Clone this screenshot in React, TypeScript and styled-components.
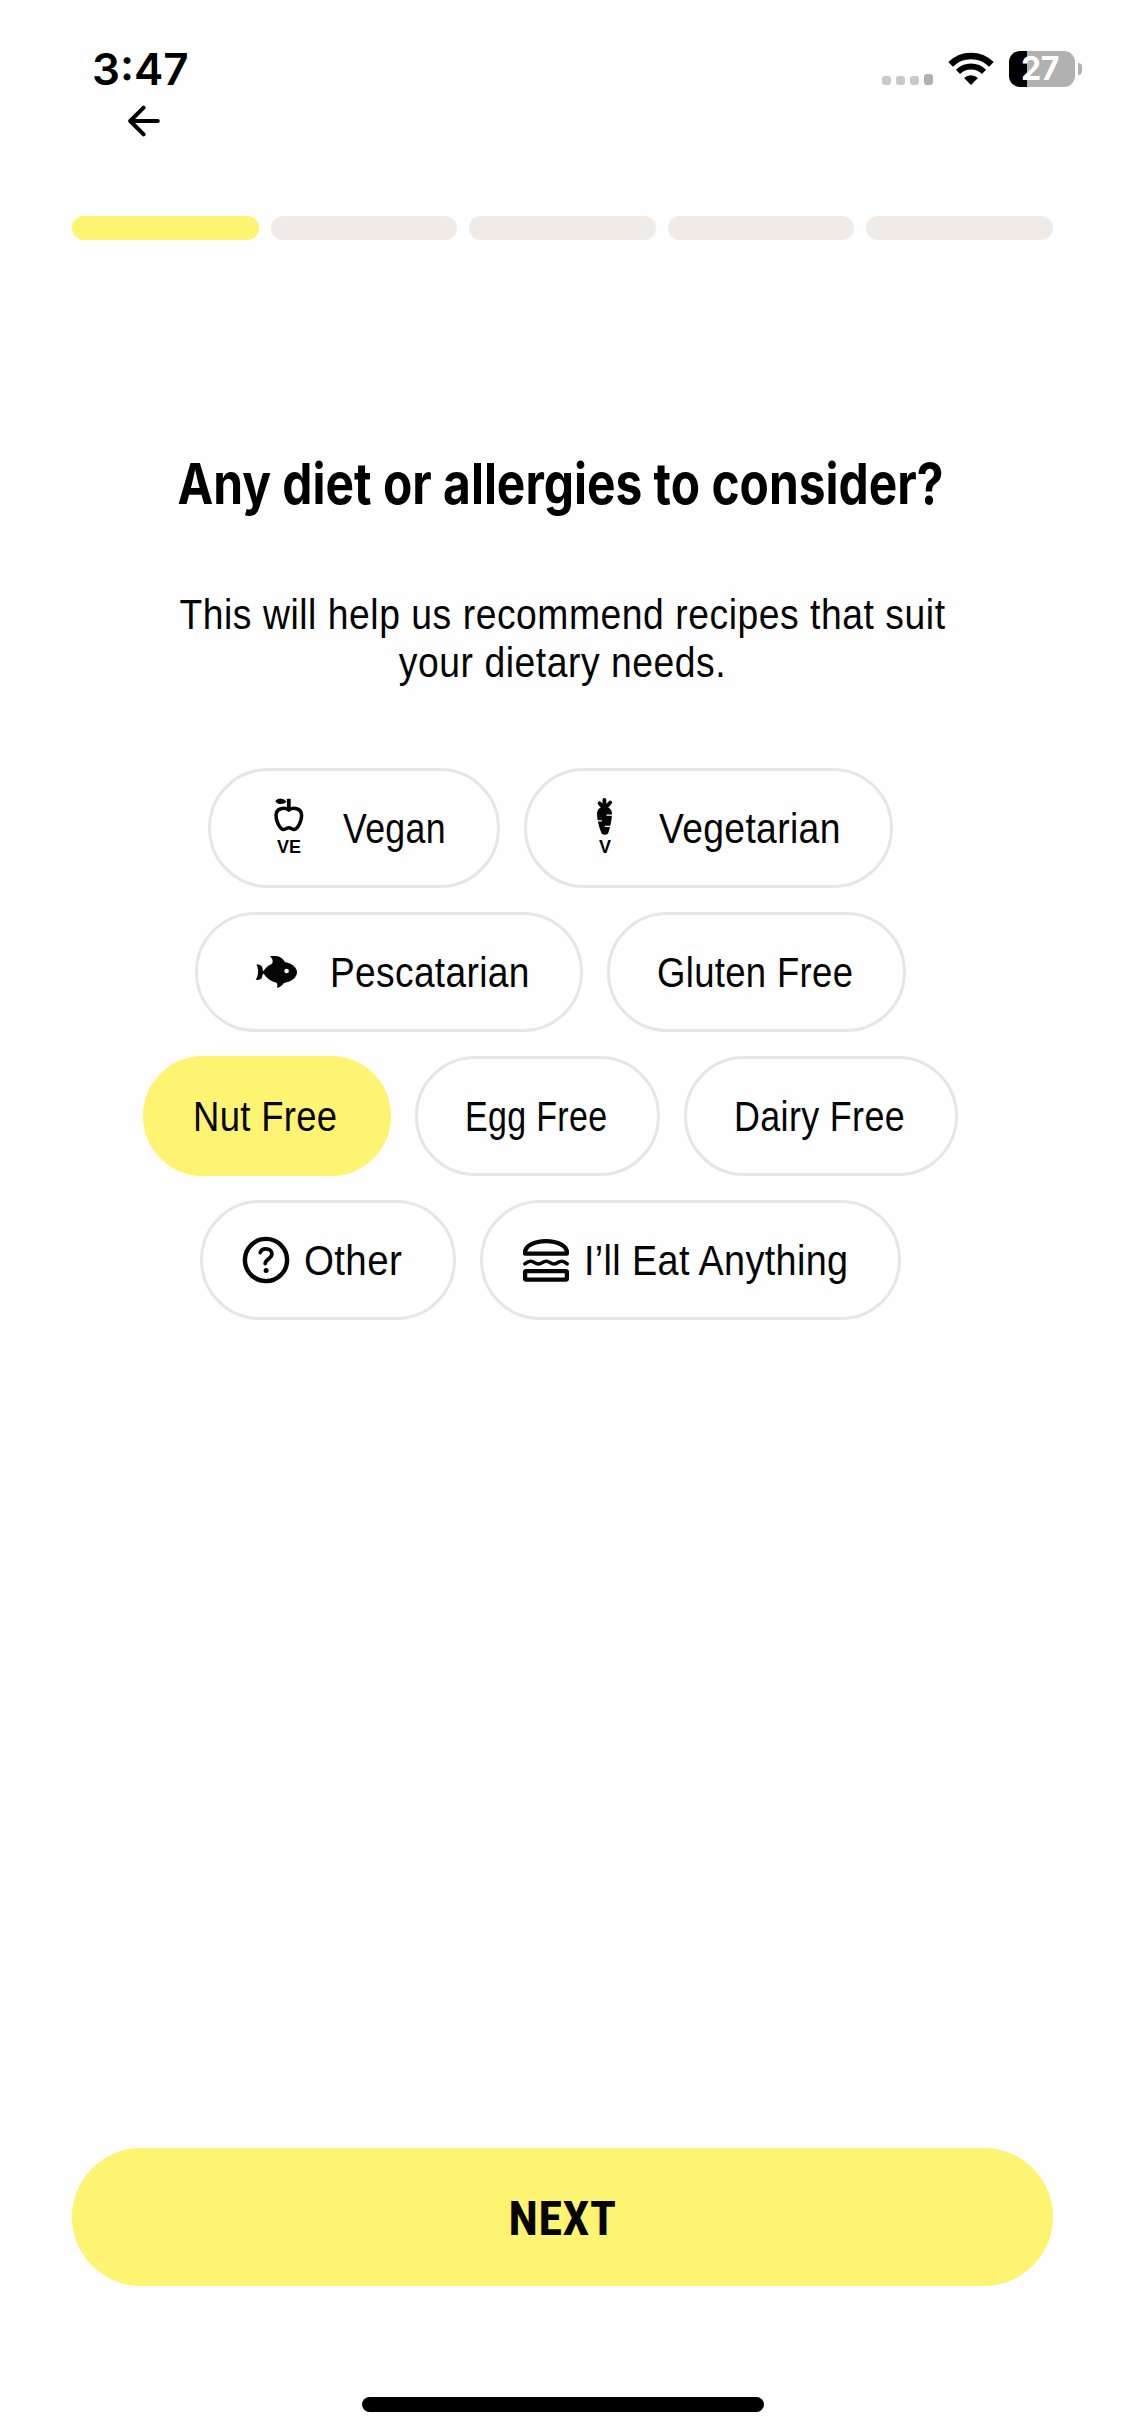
import React from 'react';
import styled, { createGlobalStyle } from 'styled-components';

const YELLOW = '#fff372';
const INK = '#050505';

const GlobalStyle = createGlobalStyle`
  *, *::before, *::after { box-sizing: border-box; }
  body { margin: 0; background: #fefefe; }
`;

const Screen = styled.div`
  display: flex;
  flex-direction: column;
  width: 1125px;
  height: 2436px;
  overflow: hidden;
  background: #fefefe;
  color: ${INK};
  font-family: 'Liberation Sans', Arial, sans-serif;
`;

const StatusBar = styled.header`
  display: flex;
  align-items: center;
  justify-content: space-between;
  height: 96px;
  padding: 42px 43px 0 92px;
`;

const Clock = styled.span`
  font: 600 44px/54px Inter, sans-serif;
  color: #000;
`;

const StatusIcons = styled.div`
  display: flex;
  align-items: center;
`;

const Signal = styled.div`
  display: flex;
  align-items: flex-end;
  gap: 5px;
  height: 33px;
  margin: 0 15px 1px 0;
`;

const SignalDot = styled.span<{ $strong?: boolean }>`
  width: 9px;
  height: ${p => (p.$strong ? 11 : 9)}px;
  border-radius: 3px;
  background: ${p => (p.$strong ? '#b1b1b1' : '#c9c9c9')};
`;

const WifiIcon = styled.svg`
  display: block;
  width: 46px;
  height: 34px;
  margin-right: 15px;
`;

const Battery = styled.div`
  display: flex;
  align-items: center;
  gap: 3px;
`;

const BatteryBody = styled.div`
  width: 66px;
  height: 36px;
  padding-left: 12px;
  border-radius: 11px;
  background: linear-gradient(90deg, #000 18px, #b1b1b1 18px);
  color: #fff;
  font: 700 32px/36px Inter, sans-serif;
  letter-spacing: -0.5px;
`;

const BatteryCap = styled.span`
  width: 4px;
  height: 12px;
  border-radius: 0 6px 6px 0;
  background: #b1b1b1;
`;

const NavBar = styled.nav`
  display: flex;
  align-items: center;
  height: 50px;
  padding-left: 128px;
`;

const BackButton = styled.button`
  display: flex;
  padding: 0;
  border: 0;
  background: none;
`;

const Progress = styled.div`
  display: grid;
  grid-template-columns: repeat(5, 1fr);
  gap: 12px;
  margin: 70px 72px 0;
`;

const Step = styled.span<{ $done?: boolean }>`
  height: 24px;
  border-radius: 12px;
  background: ${p => (p.$done ? YELLOW : '#f0ebe6')};
`;

const Title = styled.h1`
  margin: 215px 0 0;
  text-align: center;
  font-family: Inter, sans-serif;
  font-size: 57px;
  font-weight: 700;
  line-height: 58px;
  white-space: nowrap;
  color: #000;
  transform: translateX(-2px) scaleX(0.84);
`;

const Subtitle = styled.p`
  display: flex;
  flex-direction: column;
  align-items: center;
  margin: 77px 0 0;
  padding-top: 1px;
  font-size: 42.5px;
  line-height: 48px;
  letter-spacing: 0.62px;
  white-space: nowrap;
  transform: scaleX(0.877);
`;

const Options = styled.div`
  display: flex;
  flex-direction: column;
  gap: 24px;
  margin-top: 81px;
`;

const OptionRow = styled.div`
  display: flex;
  justify-content: center;
  gap: 24px;
  padding-right: 24px;
`;

const Chip = styled.button<{ $width: number; $pad: number; $gap: number; $selected?: boolean }>`
  display: flex;
  align-items: center;
  gap: ${p => p.$gap}px;
  width: ${p => p.$width}px;
  height: 120px;
  padding: 0 0 0 ${p => p.$pad}px;
  border: 3px solid ${p => (p.$selected ? YELLOW : '#e6e6e6')};
  border-radius: 60px;
  background: ${p => (p.$selected ? YELLOW : '#fefefe')};
  color: inherit;
  font-family: inherit;

  svg { flex: none; }
`;

const ChipLabel = styled.span<{ $stretch: number }>`
  padding-top: 2px;
  font-size: 42.5px;
  line-height: 50px;
  letter-spacing: 0.4px;
  white-space: nowrap;
  transform: scaleX(${p => p.$stretch});
  transform-origin: 0 50%;
`;

const IconText = styled.text`
  font: 700 18px 'Liberation Sans', Arial, sans-serif;
`;

const Footer = styled.footer`
  display: flex;
  flex-direction: column;
  align-items: center;
  margin-top: auto;
  padding: 0 72px 24px;
`;

const NextButton = styled.button`
  width: 100%;
  height: 138px;
  padding: 3px 0 0;
  border: 0;
  border-radius: 69px;
  background: ${YELLOW};
  color: ${INK};
  font: 700 48px/56px 'Roboto Condensed', Roboto, sans-serif;
  letter-spacing: 0.5px;
`;

const HomeIndicator = styled.span`
  width: 402px;
  height: 15px;
  margin-top: 111px;
  border-radius: 8px;
  background: #000;
`;

const AppleIcon = () => (
  <svg width="66" height="60" viewBox="0 0 66 60" fill={INK}>
    <path d="M19.4 3.2C21.5-.3 27-.4 30.4 3.8 27.5 7 21.6 6.8 19.4 3.2Z" />
    <rect x="30.9" y=".8" width="3.8" height="11" />
    <path
      d="M32.8 12C29 9.4 20 9.3 20 17.5 20 23 23.3 29.2 26 31.1 28.6 32.6 30 29.8 32.8 29.8 35.6 29.8 37 32.6 39.6 31.1 42.3 29.2 45.6 23 45.6 17.5 45.6 9.3 36.6 9.4 32.8 12Z"
      fill="none" stroke={INK} strokeWidth="3.5"
    />
    <IconText x="21" y="54.6">VE</IconText>
  </svg>
);

const CarrotIcon = () => (
  <svg width="66" height="60" viewBox="0 0 66 60" fill={INK}>
    <path d="M32.4 11V2M32.4 11L27.6 5.2M32.4 11L38.2 4.4" stroke={INK} strokeWidth="3.8" strokeLinecap="round" />
    <path d="M32.5 8.8C36 8.5 40 11 40 15.5 40 22 38 29 36.6 34 36 36.3 34.5 36.7 32.7 36.7 31 36.7 29.6 36.3 29 34 27.3 29 25 22 25 15.5 25 11 29 8.5 32.5 8.8Z" />
    <path d="M34.5 17.2H41M24 22.8H30M32.8 28.4H39" stroke="#fefefe" strokeWidth="1.3" />
    <IconText x="27" y="54.8">V</IconText>
  </svg>
);

const FishIcon = () => (
  <svg width="66" height="60" viewBox="0 0 66 60" fill={INK}>
    <path d="M19.5 30.3C25 22 32 19.8 38 19.8 48 19.8 54 25.5 54 30.3 54 35.5 48 41 38 41 31 41 25 38.5 19.5 30.3Z" />
    <path d="M13.3 22.6C17.6 22.4 20.2 24.6 19.6 28.2L22 30.3 19.3 33C19.6 36.6 17.4 38.4 12.8 37.8 15.6 33.4 16 27.4 13.3 22.6Z" />
    <path d="M27 14.2C34 13.2 39.6 14.4 42.4 21L29 22C30.4 19 29.6 16.6 27 14.2Z" />
    <path d="M33 40H42C39.4 42.4 38.4 45 34 46 34.8 43.6 34.4 41.8 33 40Z" />
    <circle cx="43.6" cy="29" r="2.3" fill="#fefefe" />
  </svg>
);

const QuestionIcon = () => (
  <svg width="46" height="46" viewBox="0 0 46 46" fill="none" stroke={INK} overflow="visible">
    <circle cx="23" cy="23" r="21.1" strokeWidth="4.4" />
    <path d="M17.2 15.6C17.9 13.2 20 11.8 22.8 11.8 26.3 11.8 28.9 13.8 28.9 17 28.9 21.5 22.2 22.3 22.2 26.6" strokeWidth="3.7" strokeLinecap="round" />
    <circle cx="23.1" cy="33.6" r="2.5" fill={INK} stroke="none" />
  </svg>
);

const BurgerIcon = () => (
  <svg width="46" height="46" viewBox="0 0 46 46" fill="none" stroke={INK} strokeWidth="4.3" strokeLinejoin="round" overflow="visible">
    <path d="M2.1 15.4C2.1 9 11 4.1 23 4.1S43.9 9 43.9 15.4V16.7H2.1Z" />
    <path d="M1.8 26.8C4.6 25.6 4.6 24.2 7.6 24.2 11.4 24.2 11.6 27 15.4 27S19.4 24.2 23.2 24.2 27.2 27 31 27 35 24.2 38.6 24.2C41.6 24.2 41.6 25.6 44.2 26.8" strokeWidth="3.6" strokeLinecap="round" />
    <rect x="2.1" y="34.2" width="41.8" height="8.4" rx="1" />
  </svg>
);

type Option = {
  label: string;
  width: number;
  stretch: number;
  icon?: React.ReactNode;
  layout?: 'badge' | 'glyph';
  selected?: boolean;
};

const spacing = { badge: { pad: 45, gap: 21 }, glyph: { pad: 40, gap: 15 }, plain: { pad: 47, gap: 0 } };

const rows: Option[][] = [
  [
    { label: 'Vegan', width: 292, stretch: 0.84, icon: <AppleIcon />, layout: 'badge' },
    { label: 'Vegetarian', width: 369, stretch: 0.877, icon: <CarrotIcon />, layout: 'badge' },
  ],
  [
    { label: 'Pescatarian', width: 388, stretch: 0.873, icon: <FishIcon />, layout: 'badge' },
    { label: 'Gluten Free', width: 299, stretch: 0.858 },
  ],
  [
    { label: 'Nut Free', width: 248, stretch: 0.857, selected: true },
    { label: 'Egg Free', width: 245, stretch: 0.8 },
    { label: 'Dairy Free', width: 274, stretch: 0.845 },
  ],
  [
    { label: 'Other', width: 256, stretch: 0.906, icon: <QuestionIcon />, layout: 'glyph' },
    { label: 'I’ll Eat Anything', width: 421, stretch: 0.889, icon: <BurgerIcon />, layout: 'glyph' },
  ],
];

export default function App() {
  return (
    <Screen>
      <GlobalStyle />
      <StatusBar>
        <Clock>3:47</Clock>
        <StatusIcons>
          <Signal>
            <SignalDot />
            <SignalDot />
            <SignalDot />
            <SignalDot $strong />
          </Signal>
          <WifiIcon viewBox="0 0 46 34" fill="none" stroke="#000">
            <path d="M2.6 12.4A29 29 0 0 1 43.4 12.4" strokeWidth="6.6" />
            <path d="M10 19.8A18.5 18.5 0 0 1 36 19.8" strokeWidth="5.9" />
            <path d="M23 33L16.1 26.1A9.8 9.8 0 0 1 29.9 26.1Z" fill="#000" stroke="none" />
          </WifiIcon>
          <Battery>
            <BatteryBody>27</BatteryBody>
            <BatteryCap />
          </Battery>
        </StatusIcons>
      </StatusBar>

      <NavBar>
        <BackButton aria-label="Back">
          <svg width="32" height="32" viewBox="0 0 32 32" fill="none" stroke="#000" strokeWidth="4" strokeLinecap="round" strokeLinejoin="round">
            <path d="M29.8 16H2.2M15.6 2.6L2.2 16L15.6 29.4" />
          </svg>
        </BackButton>
      </NavBar>

      <Progress>
        {[0, 1, 2, 3, 4].map(i => (
          <Step key={i} $done={i === 0} />
        ))}
      </Progress>

      <Title>Any diet or allergies to consider?</Title>
      <Subtitle>
        <span>This will help us recommend recipes that suit</span>
        <span>your dietary needs.</span>
      </Subtitle>

      <Options>
        {rows.map((row, i) => (
          <OptionRow key={i}>
            {row.map(o => {
              const s = spacing[o.layout ?? 'plain'];
              return (
                <Chip key={o.label} $width={o.width} $pad={s.pad} $gap={s.gap} $selected={o.selected}>
                  {o.icon}
                  <ChipLabel $stretch={o.stretch}>{o.label}</ChipLabel>
                </Chip>
              );
            })}
          </OptionRow>
        ))}
      </Options>

      <Footer>
        <NextButton>NEXT</NextButton>
        <HomeIndicator />
      </Footer>
    </Screen>
  );
}
